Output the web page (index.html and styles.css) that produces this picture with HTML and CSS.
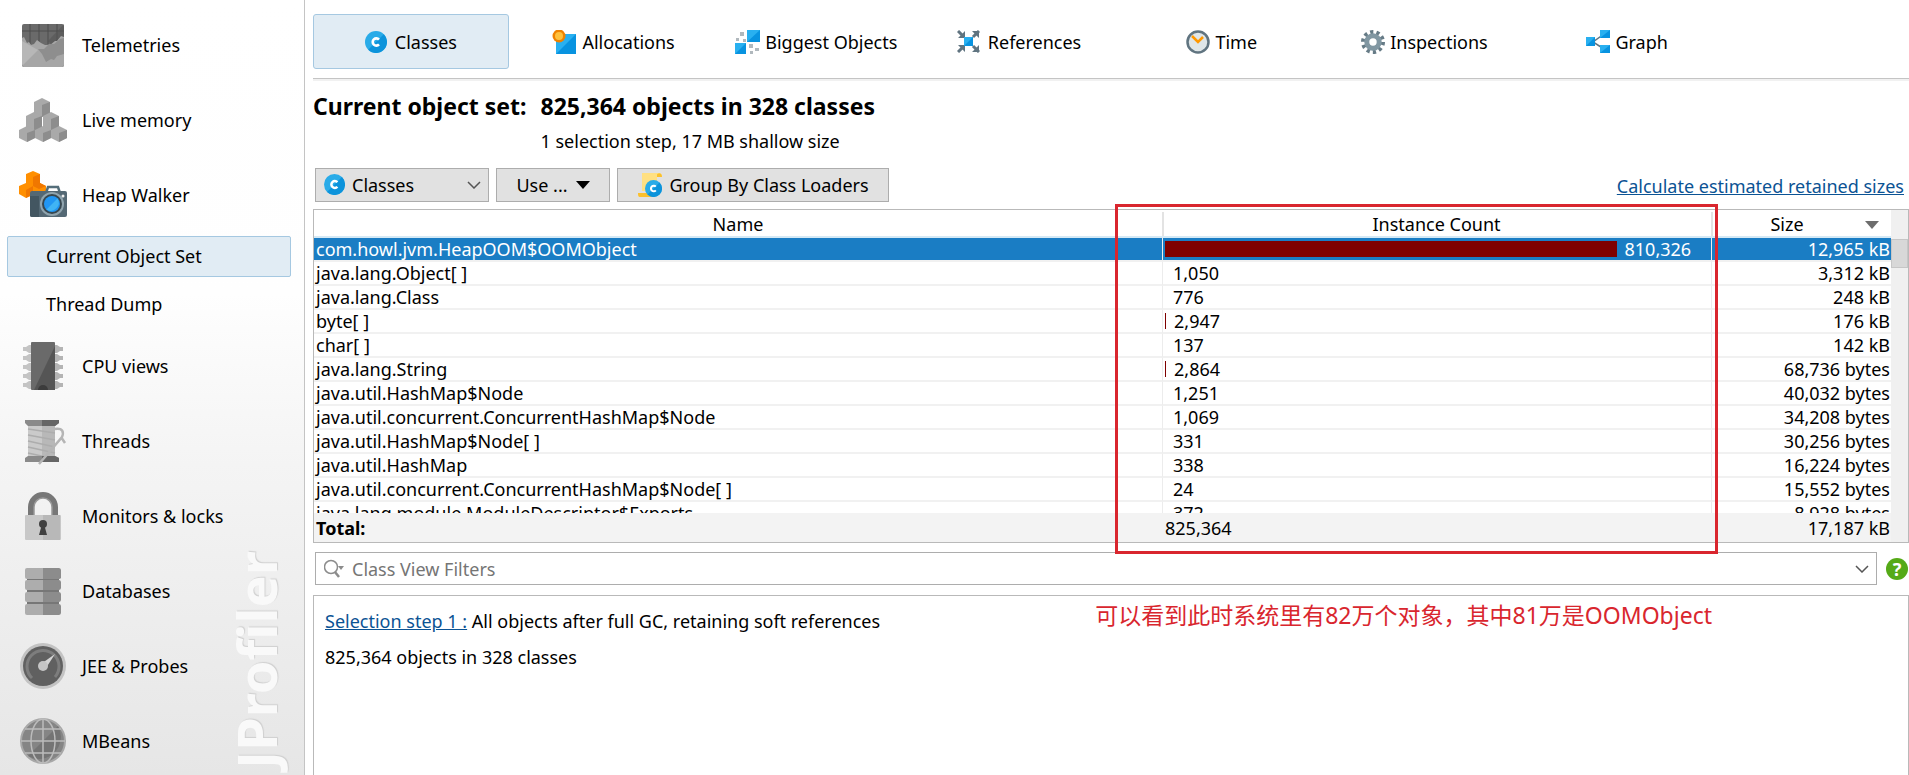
FILE: index.html
```html
<!DOCTYPE html>
<html lang="en">
<head>
  <meta charset="UTF-8" />
  <meta name="viewport" content="width=device-width, initial-scale=1.0"/>
  <title>JProfiler - Heap Walker</title>
  <link rel="stylesheet" href="styles.css">
</head>
<body>
  <!-- shared icon used by the tab, the combo and the loader button -->
  <svg class="defs" width="0" height="0" aria-hidden="true">
    <symbol id="class-icon" viewBox="0 0 22 22">
      <circle cx="11" cy="11" r="11" fill="#29abe8"/>
      <path d="M18.8 3.2A11 11 0 0 1 3.2 18.8z" fill="#0c93db"/>
      <path d="M14 8.6A3.6 3.6 0 1 0 14 13.4" fill="none" stroke="#fff" stroke-width="2.6"/>
    </symbol>
  </svg>

  <div class="app">
    <nav class="sidebar">
      <a class="item" href="#">
        <svg class="nav-icon" viewBox="0 0 48 48">
          <rect x="3" y="3" width="42" height="43" rx="2" fill="#6a6a6a"/>
          <path d="M3 10h42M11 3v20M20 3v20M29 3v20M38 3v18" stroke="#4d4d4d" stroke-width="1"/>
          <path d="M45 3v18l-12 3-4-4z" fill="#555" opacity=".6"/>
          <path d="M3 17l2-1 3 6 2-1 2 3 3-1 3-4 4 3 4 2 5 0 5-4 2 0 4-5 3 1v28a2 2 0 0 1-2 2H5a2 2 0 0 1-2-2z" fill="#a6a6a6"/>
          <path d="M19 28l6 0 5-5 5 0 6-5 4-1v16l-7 2-3 4-3-1-5 3-4-8z" fill="#8e8e8e"/>
          <path d="M3 20l16 9L4 44l-1-1z" fill="#b7b7b7"/>
        </svg>
        <span>Telemetries</span>
      </a>
      <a class="item" href="#">
        <svg class="nav-icon" viewBox="0 0 48 48">
          <path d="M15 6l8-4 8 4v11l-8 4-8-4z" fill="#a9a9a9"/><path d="M23 9l8-3v12l-8 3z" fill="#8d8d8d"/>
          <path d="M7 20l8-4 8 4v11l-8 4-8-4z" fill="#a9a9a9"/><path d="M15 23l8-3v12l-8 3z" fill="#8d8d8d"/>
          <path d="M24 20l8-4 8 4v11l-8 4-8-4z" fill="#a9a9a9"/><path d="M32 23l8-3v12l-8 3z" fill="#8d8d8d"/>
          <path d="M0 34l8-4 8 4v8l-8 4-8-4z" fill="#a9a9a9"/><path d="M8 37l8-3v8l-8 4z" fill="#8d8d8d"/>
          <path d="M16 34l8-4 8 4v8l-8 4-8-4z" fill="#a9a9a9"/><path d="M24 37l8-3v8l-8 4z" fill="#8d8d8d"/>
          <path d="M32 34l8-4 8 4v8l-8 4-8-4z" fill="#a9a9a9"/><path d="M40 37l8-3v8l-8 4z" fill="#8d8d8d"/>
        </svg>
        <span>Live memory</span>
      </a>
      <a class="item" href="#">
        <svg class="nav-icon" viewBox="0 0 48 48">
          <path d="M7 3l7-3 7 3v9l6 3v9l-7 2-6-2-7 3-7-4v-8l7-3z" fill="#ff8f00"/>
          <path d="M14 6l7-3v9l-7 3zM7 19l7-4v8l-7 4zM14 15l7-3 6 3-7 3z" fill="#f07700"/>
          <path d="M27 22l2-6h10l2 6" fill="none" stroke="#546e7a" stroke-width="2.500"/>
          <rect x="11" y="20" width="37" height="26" rx="2" fill="#546874"/>
          <path d="M11 25h9v21h-7a2 2 0 0 1-2-2z" fill="#435661"/>
          <circle cx="33" cy="33" r="12" fill="#90a4ae"/>
          <circle cx="33" cy="33" r="10" fill="#37474f"/>
          <circle cx="33" cy="33" r="8" fill="#2196f3"/>
          <path d="M38.500 27.500A8 8 0 0 1 27.500 38.500z" fill="#40b4f5"/>
          <circle cx="44" cy="25" r="1.500" fill="#eee"/>
        </svg>
        <span>Heap Walker</span>
      </a>
      <a class="sub-item active" href="#">Current Object Set</a>
      <a class="sub-item" href="#">Thread Dump</a>
      <a class="item" href="#">
        <svg class="nav-icon" viewBox="0 0 48 48">
          <path d="M4 5h3l3-2h4v8h-4l-3-2H4zM4 14h3l3-2h4v8h-4l-3-2H4zM4 23h3l3-2h4v8h-4l-3-2H4zM4 32h3l3-2h4v8h-4l-3-2H4zM4 41h3l3-2h4v8h-4l-3-2H4z" fill="#c4c4c4"/>
          <path d="M44 5h-3l-3-2h-4v8h4l3-2h3zM44 14h-3l-3-2h-4v8h4l3-2h3zM44 23h-3l-3-2h-4v8h4l3-2h3zM44 32h-3l-3-2h-4v8h4l3-2h3zM44 41h-3l-3-2h-4v8h4l3-2h3z" fill="#b4b4b4"/>
          <rect x="12" y="0" width="24" height="48" rx="1" fill="#6a6a6a"/>
          <path d="M36 4v44H15z" fill="#555"/>
          <path d="M19 48a5 5 0 0 1 10 0z" fill="#3c3c3c"/>
        </svg>
        <span>CPU views</span>
      </a>
      <a class="item" href="#">
        <svg class="nav-icon" viewBox="0 0 48 48">
          <rect x="9" y="7" width="27" height="34" fill="#cacaca"/>
          <path d="M23 7h13v34H23z" fill="#b8b8b8"/>
          <path d="M9 12l27 4M9 18l27 5M9 24l27 6M9 30l27 6M9 36l18 4" stroke="#adadad" stroke-width="1.500"/>
          <path d="M6 3h34v3l-4 3H9L6 6zM6 45h34v-4l-4-2H9l-3 2z" fill="#8a8a8a"/>
          <path d="M23 3h17v3l-4 3H23zM23 39h13l4 2v4H23z" fill="#666"/>
          <path d="M36 12c8-1 9 3 7 8L20 47M42 20l4 6" fill="none" stroke="#b5b5b5" stroke-width="2.500"/>
        </svg>
        <span>Threads</span>
      </a>
      <a class="item" href="#">
        <svg class="nav-icon" viewBox="0 0 48 48">
          <path d="M12 24V15a12 12 0 0 1 24 0v9" fill="none" stroke="#777" stroke-width="6"/>
          <path d="M15 24V15a9 9 0 0 1 18 0v9" fill="none" stroke="#999" stroke-width="1.500"/>
          <rect x="6" y="23" width="36" height="25" rx="1" fill="#c8c8c8"/>
          <path d="M24 23h17v25H24z" fill="#b8b8b8"/>
          <circle cx="24" cy="32" r="4" fill="#404040"/>
          <path d="M23 32h2l3 11h-8z" fill="#404040"/>
        </svg>
        <span>Monitors &amp; locks</span>
      </a>
      <a class="item" href="#">
        <svg class="nav-icon" viewBox="0 0 48 48">
          <path d="M8 10h32v33H8z" fill="#777"/>
          <g fill="#adadad"><rect x="6" y="1" width="36" height="11" rx="2"/><rect x="6" y="13" width="36" height="10" rx="2"/><rect x="6" y="25" width="36" height="10" rx="2"/><rect x="6" y="37" width="36" height="11" rx="2"/></g>
          <path d="M24 1h16l2 2v8l-2 1H24zM24 13h16l2 2v6l-2 2H24zM24 25h16l2 2v6l-2 2H24zM24 37h16l2 2v7l-2 2H24z" fill="#8c8c8c"/>
        </svg>
        <span>Databases</span>
      </a>
      <a class="item" href="#">
        <svg class="nav-icon" viewBox="0 0 48 48">
          <circle cx="24" cy="24" r="23" fill="#c3c3c3"/>
          <circle cx="24" cy="24" r="20" fill="#606060"/>
          <path d="M13 36A16 16 0 1 1 36 35" fill="none" stroke="#7d7d7d" stroke-width="3"/>
          <path d="M36 12L27 26l-5-4z" fill="#d5d5d5"/>
          <circle cx="24" cy="24" r="5" fill="#c6c6c6"/>
        </svg>
        <span>JEE &amp; Probes</span>
      </a>
      <a class="item" href="#">
        <svg class="nav-icon" viewBox="0 0 48 48">
          <circle cx="24" cy="24" r="22" fill="#858585" stroke="#a8a8a8" stroke-width="2"/>
          <path d="M39 9A22 22 0 0 1 9 39z" fill="#747474"/>
          <path d="M24 2v44M2 24h44M6 12h36M6 36h36" stroke="#bcbcbc" stroke-width="1.500"/>
          <ellipse cx="24" cy="24" rx="12" ry="22" fill="none" stroke="#bcbcbc" stroke-width="1.500"/>
        </svg>
        <span>MBeans</span>
      </a>
      <div class="watermark">JProfiler</div>
    </nav>

    <main class="main">
      <div class="tabs">
        <button class="tab active"><svg width="22" height="22"><use href="#class-icon"/></svg><span class="wide">Classes</span></button>
        <button class="tab">
          <svg width="25" height="24" viewBox="0 0 25 24"><path d="M4 4h20v20H4z" fill="#29b0f0"/><path d="M24 4v20H4z" fill="#0893e0"/><circle cx="7" cy="6" r="6.500" fill="#ef8200"/><circle cx="7" cy="6" r="4" fill="#ffc13c"/></svg>
          <span>Allocations</span>
        </button>
        <button class="tab">
          <svg width="25" height="24" viewBox="0 0 25 24"><path d="M12 0h13v12H12zM0 13h11v11H0z" fill="#29b0f0"/><path d="M25 0v12H12zM11 13v11H0z" fill="#0893e0"/><path d="M5 2h4v4H5zM1 8h3v3H1zM8 9h3v3H8zM14 14h4v4h-4zM20 18h4v3h-4zM15 21h3v3h-3z" fill="#b0b8bd"/></svg>
          <span>Biggest Objects</span>
        </button>
        <button class="tab">
          <svg width="23" height="23" viewBox="0 0 23 23"><path d="M1 1l6 6M22 1l-6 6M1 22l6-6M22 22l-6-6" stroke="#607480" stroke-width="3"/><path d="M8 1v7H1zM15 1h7v7zM1 15h7v7zM22 15v7h-7z" fill="#607480"/><path d="M7 7h9v9H7z" fill="#29b0f0"/><path d="M16 7v9H7z" fill="#0893e0"/></svg>
          <span class="wide">References</span>
        </button>
        <button class="tab">
          <svg width="24" height="24" viewBox="0 0 24 24"><circle cx="12" cy="12" r="10.500" fill="#dfe6e8" stroke="#607480" stroke-width="2.500"/><path d="M6 6l6 6 5-5" fill="none" stroke="#ff9800" stroke-width="2.500"/></svg>
          <span>Time</span>
        </button>
        <button class="tab">
          <svg width="24" height="24" viewBox="0 0 24 24"><circle cx="12" cy="12" r="10" fill="none" stroke="#667b86" stroke-width="4" stroke-dasharray="3.200 3.080"/><circle cx="12" cy="12" r="6.200" fill="none" stroke="#8197a2" stroke-width="5"/></svg>
          <span>Inspections</span>
        </button>
        <button class="tab">
          <svg width="24" height="23" viewBox="0 0 24 23"><path d="M18 4L7 12l11 7" fill="none" stroke="#607480" stroke-width="1.500"/><path d="M0 7h9v9H0zM14 0h10v8H14zM14 15h10v8H14z" fill="#29b0f0"/><path d="M9 7v9H0zM24 0v8H14zM24 15v8H14z" fill="#0893e0"/></svg>
          <span>Graph</span>
        </button>
      </div>

      <header class="summary">
        <h1>Current object set:</h1>
        <div>
          <h1>825,364 objects in 328 classes</h1>
          <p>1 selection step, 17 MB shallow size</p>
        </div>
      </header>

      <div class="toolbar">
        <div class="combo">
          <svg class="combo-icon" width="21" height="21"><use href="#class-icon"/></svg>
          <select aria-label="Aggregation level"><option>Classes</option><option>Packages</option></select>
          <svg class="combo-arrow" width="14" height="8" viewBox="0 0 14 8"><path d="M1 1l6 6 6-6" fill="none" stroke="#555" stroke-width="1.500"/></svg>
        </div>
        <button class="btn use">Use ... <svg width="14" height="8"><path d="M0 0h14L7 8z"/></svg></button>
        <button class="btn group">
          <svg width="26" height="26" viewBox="0 0 26 26"><path d="M5 1h17c3 0 3 3 3 4h-5v14H5z" fill="#ffe082"/><path d="M20 5V3c0-2 5-3 5 2zM1 21h14v4H3c-2 0-2-2-2-4z" fill="#fbc02d"/><use href="#class-icon" x="8" y="8" width="17" height="17"/></svg>
          Group By Class Loaders
        </button>
        <a class="link retained" href="#">Calculate estimated retained sizes</a>
      </div>

      <div class="grid">
        <div class="grid-view">
          <div class="rows">
            <table>
              <colgroup><col><col class="col-count"><col class="col-size"></colgroup>
              <thead>
                <tr>
                  <th>Name</th>
                  <th>Instance Count</th>
                  <th class="sorted">Size <svg width="14" height="8"><path d="M0 0h14L7 8z" fill="#6d6d6d"/></svg></th>
                </tr>
              </thead>
              <tbody>
                <tr class="selected"><td>com.howl.jvm.HeapOOM$OOMObject</td><td><div class="count"><i style="width:83%"></i>810,326</div></td><td>12,965 kB</td></tr>
                <tr><td>java.lang.Object[ ]</td><td><div class="count"><i style="width:0%"></i>1,050</div></td><td>3,312 kB</td></tr>
                <tr><td>java.lang.Class</td><td><div class="count"><i style="width:0%"></i>776</div></td><td>248 kB</td></tr>
                <tr><td>byte[ ]</td><td><div class="count"><i style="width:0.2%"></i>2,947</div></td><td>176 kB</td></tr>
                <tr><td>char[ ]</td><td><div class="count"><i style="width:0%"></i>137</div></td><td>142 kB</td></tr>
                <tr><td>java.lang.String</td><td><div class="count"><i style="width:0.2%"></i>2,864</div></td><td>68,736 bytes</td></tr>
                <tr><td>java.util.HashMap$Node</td><td><div class="count"><i style="width:0%"></i>1,251</div></td><td>40,032 bytes</td></tr>
                <tr><td>java.util.concurrent.ConcurrentHashMap$Node</td><td><div class="count"><i style="width:0%"></i>1,069</div></td><td>34,208 bytes</td></tr>
                <tr><td>java.util.HashMap$Node[ ]</td><td><div class="count"><i style="width:0%"></i>331</div></td><td>30,256 bytes</td></tr>
                <tr><td>java.util.HashMap</td><td><div class="count"><i style="width:0%"></i>338</div></td><td>16,224 bytes</td></tr>
                <tr><td>java.util.concurrent.ConcurrentHashMap$Node[ ]</td><td><div class="count"><i style="width:0%"></i>24</div></td><td>15,552 bytes</td></tr>
                <tr><td>java.lang.module.ModuleDescriptor$Exports</td><td><div class="count"><i style="width:0%"></i>372</div></td><td>8,928 bytes</td></tr>
              </tbody>
            </table>
          </div>
          <!-- totals stay in view below the scrolled rows -->
          <table class="totals">
            <colgroup><col><col class="col-count"><col class="col-size"></colgroup>
            <tbody>
              <tr><td><b>Total:</b></td><td>825,364</td><td>17,187 kB</td></tr>
            </tbody>
          </table>
        </div>
        <div class="scrollbar"><div class="thumb"></div></div>
        <div class="highlight"></div>
      </div>

      <div class="filter-row">
        <div class="filter">
          <svg width="20" height="19" viewBox="0 0 20 19"><circle cx="7" cy="8" r="6.500" fill="none" stroke="#8c8c8c" stroke-width="1.500"/><path d="M11 13l4 5" stroke="#8c8c8c" stroke-width="2.500"/><path d="M14 7h6l-3 4z" fill="#8c8c8c"/></svg>
          <input type="text" placeholder="Class View Filters" aria-label="Class View Filters">
          <button class="drop" aria-label="Filter history"><svg width="14" height="8" viewBox="0 0 14 8"><path d="M1 1l6 6 6-6" fill="none" stroke="#555" stroke-width="1.500"/></svg></button>
        </div>
        <button class="help" aria-label="Help">?</button>
      </div>

      <section class="steps">
        <p><a class="link" href="#">Selection step 1 :</a> All objects after full GC, retaining soft references</p>
        <p>825,364 objects in 328 classes</p>
        <div class="note" lang="zh">可以看到此时系统里有82万个对象，其中81万是OOMObject</div>
      </section>
    </main>
  </div>
</body>
</html>
```
FILE: styles.css
```css
:root {
  --text: #000;
  --link: #0b5394;
  --line: #b9b9b9;
  --select: #1a7dc4;
  --red: #d9262e;
}
* {
  box-sizing: border-box;
}
body {
  margin: 0;
  font-family: "Noto Sans", "Noto Sans CJK SC", sans-serif;
  font-size: 18px;
  line-height: 24px;
  color: var(--text);
  background: #fff;
}
button, select, input {
  font: inherit;
  color: inherit;
}
h1, p {
  margin: 0;
}
.defs {
  position: absolute;
}
.app {
  display: flex;
  height: 100vh;
  overflow: hidden;
}

/* sidebar */
.sidebar {
  position: relative;
  flex: 0 0 305px;
  padding-top: 7px;
  border-right: 1px solid #c4c4c4;
  background: linear-gradient(#fff 0%, #fefefe 38%, #f4f4f4 60%, #e6e6e6 100%);
  overflow: hidden;
}
.item {
  display: flex;
  align-items: center;
  gap: 15px;
  height: 75px;
  padding-left: 19px;
  color: inherit;
  text-decoration: none;
}
.nav-icon {
  width: 48px;
  height: 48px;
}
.sub-item {
  display: block;
  margin: 4px 13px 7px 7px;
  padding: 7px 0 8px 38px;
  border: 1px solid transparent;
  border-radius: 2px;
  color: inherit;
  text-decoration: none;
}
.sub-item + .sub-item {
  margin-bottom: 3px;
}
.active {
  border-color: #a5c8e1;
  background: #e1ecf4;
}
.watermark {
  position: absolute;
  left: 218px;
  bottom: 6px;
  writing-mode: vertical-rl;
  transform: rotate(180deg);
  font-size: 54px;
  line-height: 76px;
  font-weight: bold;
  color: #f9f9f9;
  text-shadow: 1px 1px 1px #d0d0d0;
}

/* main area */
.main {
  flex: 1;
  min-width: 0;
  display: flex;
  flex-direction: column;
  padding-left: 8px;
}
.tabs {
  display: flex;
  gap: 7px;
  padding: 14px 184px 9px 0;
  border-bottom: 1px solid #c4c4c4;
  box-shadow: 0 2px 0 #f1f1f1;
}
.tab {
  flex: 1 1 0;
  display: flex;
  align-items: center;
  justify-content: center;
  gap: 5px;
  height: 55px;
  padding: 0;
  border: 1px solid transparent;
  border-radius: 3px;
  background: none;
  white-space: nowrap;
}
.tab.active {
  border-color: #a5c8e1;
  background: #e1ecf4;
}
.tab .wide {
  margin-left: 3px;
}
.summary {
  display: flex;
  gap: 14px;
  padding: 11px 0 15px;
}
.summary h1 {
  font-size: 23px;
  line-height: 32px;
}
.summary p {
  padding-top: 7px;
}
.toolbar {
  display: flex;
  align-items: flex-start;
  gap: 7px;
  padding: 0 5px 7px 2px;
}
.combo {
  position: relative;
  width: 174px;
}
.combo select {
  appearance: none;
  width: 100%;
  height: 34px;
  padding: 0 0 0 36px;
  border: 1px solid #adadad;
  border-radius: 0;
  background: #e1e1e1;
}
.combo-icon {
  position: absolute;
  left: 9px;
  top: 6px;
}
.combo-arrow {
  position: absolute;
  right: 8px;
  top: 13px;
}
.btn {
  display: flex;
  align-items: center;
  justify-content: center;
  gap: 8px;
  height: 34px;
  padding: 0 18px;
  border: 1px solid #adadad;
  background: #e1e1e1;
}
.use {
  width: 114px;
}
.group {
  gap: 6px;
  width: 272px;
  white-space: nowrap;
}
.link {
  color: var(--link);
}
.retained {
  margin-left: auto;
  padding-top: 6px;
}

/* class table */
.grid {
  position: relative;
  display: flex;
  border: 1px solid var(--line);
}
.grid-view {
  flex: 1;
}
.rows {
  height: 303px;
  overflow: hidden;
}
table {
  width: 100%;
  table-layout: fixed;
  border-collapse: separate;
  border-spacing: 0;
}
.col-count {
  width: 549px;
}
.col-size {
  width: 180px;
}
th {
  position: relative;
  height: 28px;
  padding: 2px 0 0;
  border-bottom: 2px solid #d5e9f5;
  font-weight: normal;
}
th + th::before {
  content: "";
  position: absolute;
  left: 0;
  top: 2px;
  width: 2px;
  height: 24px;
  background: #e3e3e3;
}
.sorted {
  padding-right: 28px;
}
.sorted svg {
  position: absolute;
  right: 12px;
  top: 11px;
}
td {
  height: 24px;
  padding: 0 2px;
  border-bottom: 2px solid #f1f1f1;
  line-height: 22px;
  white-space: nowrap;
}
td + td {
  border-left: 1px solid #ececec;
}
td:last-child {
  padding-right: 1px;
  text-align: right;
}
.selected td {
  background: var(--select) padding-box;
  color: #fff;
}
.count {
  display: flex;
  align-items: center;
  gap: 8px;
}
.count i {
  height: 16px;
  background: #7f0000;
}
.totals td {
  height: 29px;
  border-bottom: 0;
  border-left-color: #f3f3f3;
  background: #f3f3f3;
}
.scrollbar {
  width: 17px;
  padding-top: 29px;
  background: #f0f0f0;
}
.thumb {
  height: 29px;
  border: 1px solid #c6c6c6;
  background: #d8d8d8;
}
.highlight {
  position: absolute;
  top: -6px;
  right: 190px;
  width: 603px;
  height: 350px;
  border: 3px solid var(--red);
}

/* filter */
.filter-row {
  display: flex;
  align-items: center;
  gap: 9px;
  padding: 9px 1px 10px 2px;
}
.filter {
  flex: 1;
  display: flex;
  align-items: center;
  gap: 8px;
  height: 33px;
  padding: 0 7px 0 8px;
  border: 1px solid #adadad;
}
.filter input {
  flex: 1;
  padding: 0;
  border: 0;
  outline: 0;
}
.filter input::placeholder {
  color: #757575;
}
.drop {
  display: flex;
  padding: 0;
  border: 0;
  background: none;
}
.help {
  width: 22px;
  height: 22px;
  padding: 0;
  border: 0;
  border-radius: 50%;
  background: #55aa17;
  color: #fff;
  font-weight: bold;
  line-height: 22px;
}

/* selection steps */
.steps {
  position: relative;
  flex: 1;
  padding: 13px 11px;
  border: 1px solid var(--line);
  border-bottom: 0;
}
.steps p {
  margin-bottom: 12px;
}
.note {
  position: absolute;
  top: 4px;
  right: 196px;
  font-size: 23px;
  line-height: 30px;
  color: var(--red);
}
```
